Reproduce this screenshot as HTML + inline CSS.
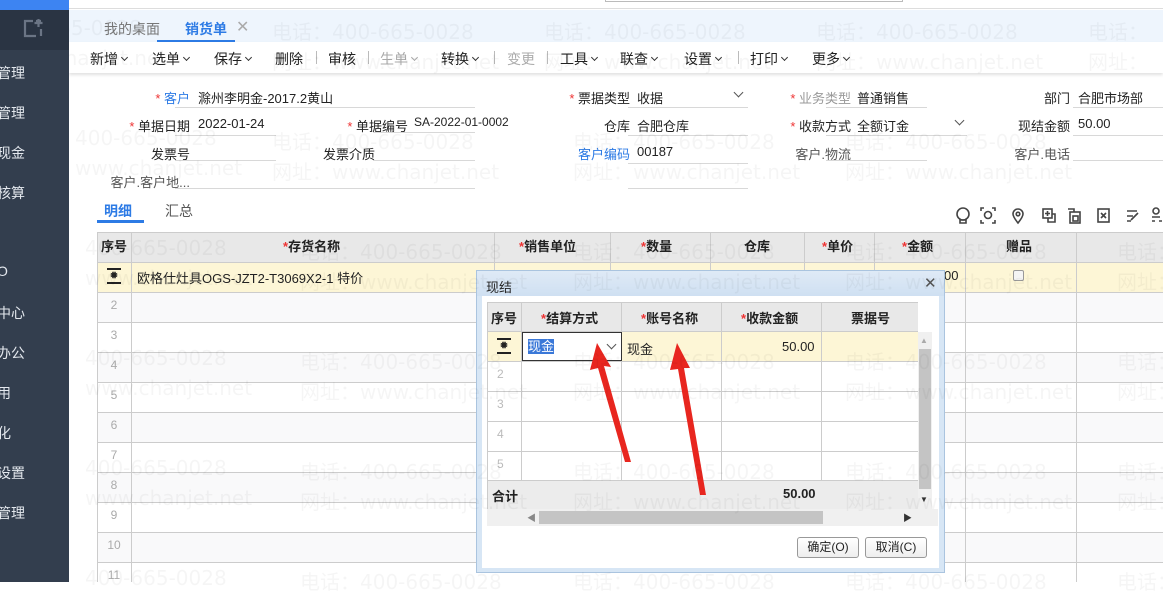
<!DOCTYPE html>
<html><head><meta charset="utf-8">
<style>
*{margin:0;padding:0;box-sizing:border-box}
body{width:1163px;height:582px;overflow:hidden;position:relative;background:#fff;font-family:"Liberation Sans","Noto Sans CJK SC",sans-serif;font-size:13px;color:#222}
.a{position:absolute;white-space:nowrap}
.side{position:absolute;left:0;top:0;width:69px;height:582px;background:#333e4e;z-index:60}
.side .t{position:absolute;left:0;width:69px;height:10px;background:#3d84f2;top:0}
.side .h{position:absolute;left:0;top:10px;width:69px;height:40px;background:#2a3443}
.side .i{position:absolute;left:-3px;color:#e4e8ee;font-size:14px}
.tb span{position:absolute;top:49px;font-size:14px;color:#222}
.c{display:inline-block;width:5px;height:5px;border-right:1.5px solid #333;border-bottom:1.5px solid #333;transform:rotate(45deg);margin-left:4px;vertical-align:4px}
.gr .c{border-color:#aaa}
.cv{position:absolute;width:7px;height:7px;border-right:1.5px solid #555;border-bottom:1.5px solid #555;transform:rotate(45deg)}
.sep{position:absolute;top:51px;width:1px;height:13px;background:#bbb}
.lbl{position:absolute;text-align:right;font-size:13px;color:#222}
.ul{position:absolute;height:1px;background:#d8d8d8}
.req{color:#e33}
.g{position:absolute;background:#ccc}
.hd{position:absolute;top:236px;font-weight:bold;font-size:13px}
.rn{position:absolute;left:97px;width:34px;text-align:center;color:#aaa;font-size:12px}
.wm{position:absolute;font-size:20px;color:rgba(0,0,0,0.04);white-space:nowrap;font-family:"DejaVu Sans","Noto Sans CJK SC",sans-serif;pointer-events:none;z-index:50}
</style></head><body>
<!-- top -->
<div class="a" style="left:69px;top:0;width:1094px;height:9px;background:#fff;border-bottom:1px solid #ddd"></div>
<div class="a" style="left:605px;top:-2px;width:298px;height:4px;border:1px solid #bbb;background:#fff"></div>
<div class="a" style="left:69px;top:10px;width:1094px;height:32px;background:#eef5fd"></div>
<div class="a" style="left:104px;top:19px;font-size:14px;color:#777">我的桌面</div>
<div class="a" style="left:185px;top:19px;font-size:14px;color:#2d7be5;font-weight:bold">销货单</div>
<div class="a" style="left:236px;top:17px;font-size:16px;color:#aaa">✕</div>
<div class="a" style="left:157px;top:40px;width:78px;height:2px;background:#2d7be5"></div>
<div class="a" style="left:69px;top:42px;width:1094px;height:31px;background:#fff;box-shadow:0 2px 3px rgba(0,0,0,0.12)"></div>
<div class="tb">
<span style="left:90px">新增<i class="c"></i></span><span style="left:152px">选单<i class="c"></i></span><span style="left:214px">保存<i class="c"></i></span><span style="left:275px">删除</span>
<span style="left:328px">审核</span><span class="gr" style="left:380px;color:#aaa">生单<i class="c"></i></span><span style="left:441px">转换<i class="c"></i></span><span style="left:507px;color:#aaa">变更</span>
<span style="left:560px">工具<i class="c"></i></span><span style="left:620px">联查<i class="c"></i></span><span style="left:684px">设置<i class="c"></i></span><span style="left:750px">打印<i class="c"></i></span><span style="left:812px">更多<i class="c"></i></span>
</div>
<div class="sep" style="left:316px"></div><div class="sep" style="left:368px"></div><div class="sep" style="left:494px"></div><div class="sep" style="left:547px"></div><div class="sep" style="left:738px"></div>
<!-- form -->
<div class="lbl" style="left:100px;width:90px;top:88px;color:#2d7be5"><span class="req">* </span>客户</div>
<div class="a" style="left:198px;top:88px">滁州李明金-2017.2黄山</div><div class="ul" style="left:175px;width:300px;top:107px"></div>
<div class="lbl" style="left:540px;width:90px;top:88px"><span class="req">* </span>票据类型</div>
<div class="a" style="left:637px;top:88px">收据</div><div class="cv" style="left:735px;top:89px"></div><div class="ul" style="left:628px;width:120px;top:107px"></div>
<div class="lbl" style="left:761px;width:90px;top:88px;color:#999"><span class="req">* </span>业务类型</div>
<div class="a" style="left:857px;top:88px">普通销售</div><div class="ul" style="left:826px;width:101px;top:107px"></div>
<div class="lbl" style="left:1000px;width:70px;top:88px">部门</div>
<div class="a" style="left:1078px;top:88px">合肥市场部</div><div class="ul" style="left:1073px;width:90px;top:107px"></div>

<div class="lbl" style="left:100px;width:90px;top:116px"><span class="req">* </span>单据日期</div>
<div class="a" style="left:198px;top:116px">2022-01-24</div><div class="ul" style="left:175px;width:101px;top:135px"></div>
<div class="lbl" style="left:318px;width:90px;top:116px"><span class="req">* </span>单据编号</div>
<div class="a" style="left:414px;top:115px;font-size:12px">SA-2022-01-0002</div><div class="ul" style="left:373px;width:102px;top:132px"></div>
<div class="lbl" style="left:540px;width:90px;top:116px">仓库</div>
<div class="a" style="left:637px;top:116px">合肥仓库</div><div class="ul" style="left:628px;width:120px;top:135px"></div>
<div class="lbl" style="left:761px;width:90px;top:116px"><span class="req">* </span>收款方式</div>
<div class="a" style="left:857px;top:116px">全额订金</div><div class="cv" style="left:956px;top:117px"></div><div class="ul" style="left:826px;width:141px;top:135px"></div>
<div class="lbl" style="left:980px;width:90px;top:116px">现结金额</div>
<div class="a" style="left:1078px;top:116px">50.00</div><div class="ul" style="left:1073px;width:90px;top:135px"></div>

<div class="lbl" style="left:100px;width:90px;top:144px">发票号</div><div class="ul" style="left:175px;width:101px;top:160px"></div>
<div class="a" style="left:323px;top:144px">发票介质</div><div class="ul" style="left:373px;width:102px;top:160px"></div>
<div class="lbl" style="left:540px;width:90px;top:144px;color:#2d7be5">客户编码</div>
<div class="a" style="left:637px;top:144px">00187</div><div class="ul" style="left:628px;width:120px;top:163px"></div>
<div class="lbl" style="left:761px;width:90px;top:144px;color:#555">客户.物流</div><div class="ul" style="left:826px;width:101px;top:160px"></div>
<div class="lbl" style="left:980px;width:90px;top:144px;color:#555">客户.电话</div><div class="ul" style="left:1073px;width:90px;top:160px"></div>
<div class="lbl" style="left:90px;width:100px;top:172px;color:#555">客户.客户地...</div><div class="ul" style="left:175px;width:300px;top:188px"></div><div class="ul" style="left:628px;width:120px;top:188px"></div>

<!-- tabs -->
<div class="a" style="left:104px;top:201px;font-size:14px;color:#2d7be5;font-weight:bold">明细</div>
<div class="a" style="left:165px;top:201px;font-size:14px;color:#555">汇总</div>
<div class="a" style="left:97px;top:220px;width:47px;height:3px;background:#2d7be5"></div>
<svg class="a" style="left:955px;top:207px" width="208" height="18" fill="none" stroke="#444" stroke-width="1.6">
 <circle cx="8" cy="7" r="6"/><path d="M5 13h6v3H5z"/>
 <path d="M29 1h-3v3M37 1h3v3M29 16h-3v-3M37 16h3v-3"/><circle cx="33" cy="8" r="3.5"/>
 <path d="M63 16c-4-5-5-7-5-9a5 5 0 0 1 10 0c0 2-1 4-5 9z"/><circle cx="63" cy="7" r="1.8"/>
 <rect x="88" y="2" width="9" height="9"/><path d="M92.5 4v5M90 6.5h5M93 11v4h7V7h-3"/>
 <rect x="115" y="5" width="10" height="11"/><rect x="118" y="9" width="5" height="5"/><path d="M113 2h6v3"/>
 <rect x="143" y="2" width="11" height="13"/><path d="M146 6l5 5M151 6l-5 5"/>
 <path d="M172 4h10M172 9h6M172 14h4M176 13l7-7"/>
 <circle cx="201" cy="4" r="3"/><path d="M197 10h8M197 14h3M204 14h3"/>
</svg>

<!-- grid -->
<div class="a" style="left:97px;top:232px;width:1066px;height:30px;background:#e8e8e8"></div>
<div class="a" style="left:97px;top:262px;width:1066px;height:30px;background:#fdf6d6"></div>
<div class="a" style="left:97px;top:292px;width:1066px;height:30px;background:#f9f9fa"></div>
<div class="a" style="left:97px;top:352px;width:1066px;height:30px;background:#f9f9fa"></div>
<div class="a" style="left:97px;top:412px;width:1066px;height:30px;background:#f9f9fa"></div>
<div class="a" style="left:97px;top:472px;width:1066px;height:30px;background:#f9f9fa"></div>
<div class="a" style="left:97px;top:532px;width:1066px;height:30px;background:#f9f9fa"></div>
<div class="g" style="left:97px;top:232px;width:1066px;height:1px"></div>
<div class="g" style="left:97px;top:262px;width:1066px;height:1px"></div>
<div class="g" style="left:97px;top:292px;width:1066px;height:1px"></div>
<div class="g" style="left:97px;top:322px;width:1066px;height:1px"></div>
<div class="g" style="left:97px;top:352px;width:1066px;height:1px"></div>
<div class="g" style="left:97px;top:382px;width:1066px;height:1px"></div>
<div class="g" style="left:97px;top:412px;width:1066px;height:1px"></div>
<div class="g" style="left:97px;top:442px;width:1066px;height:1px"></div>
<div class="g" style="left:97px;top:472px;width:1066px;height:1px"></div>
<div class="g" style="left:97px;top:502px;width:1066px;height:1px"></div>
<div class="g" style="left:97px;top:532px;width:1066px;height:1px"></div>
<div class="g" style="left:97px;top:562px;width:1066px;height:1px"></div>
<div class="g" style="left:97px;top:232px;width:1px;height:350px"></div>
<div class="g" style="left:131px;top:232px;width:1px;height:350px"></div>
<div class="g" style="left:494px;top:232px;width:1px;height:60px"></div>
<div class="g" style="left:610px;top:232px;width:1px;height:60px"></div>
<div class="g" style="left:710px;top:232px;width:1px;height:60px"></div>
<div class="g" style="left:804px;top:232px;width:1px;height:60px"></div>
<div class="g" style="left:874px;top:232px;width:1px;height:60px"></div>
<div class="g" style="left:965px;top:232px;width:1px;height:350px"></div>
<div class="g" style="left:1076px;top:232px;width:1px;height:350px"></div>
<div class="hd" style="left:101px">序号</div>
<div class="hd" style="left:283px"><span class="req">*</span>存货名称</div>
<div class="hd" style="left:519px"><span class="req">*</span>销售单位</div>
<div class="hd" style="left:641px"><span class="req">*</span>数量</div>
<div class="hd" style="left:744px">仓库</div>
<div class="hd" style="left:822px"><span class="req">*</span>单价</div>
<div class="hd" style="left:902px"><span class="req">*</span>金额</div>
<div class="hd" style="left:1006px">赠品</div>
<div class="a" style="left:107px;top:268px;width:14px;height:16px;border-top:2px solid #222;border-bottom:2px solid #222;text-align:center;font-size:11px;line-height:12px">✹</div>
<div class="a" style="left:137px;top:268px">欧格仕灶具OGS-JZT2-T3069X2-1 特价</div>
<div class="a" style="left:944px;top:268px">00</div>
<div class="a" style="left:1013px;top:270px;width:11px;height:11px;border:1px solid #999;border-radius:2px;background:#f4f4f4"></div>
<div class="rn" style="top:298px">2</div><div class="rn" style="top:328px">3</div><div class="rn" style="top:358px">4</div><div class="rn" style="top:388px">5</div><div class="rn" style="top:418px">6</div><div class="rn" style="top:448px">7</div><div class="rn" style="top:478px">8</div><div class="rn" style="top:508px">9</div><div class="rn" style="top:538px">10</div><div class="rn" style="top:568px">11</div>

<!-- sidebar -->
<div class="side"><div class="t"></div><div class="h"></div>
<svg class="a" style="left:23px;top:19px" width="20" height="20" fill="none" stroke="#6b7585" stroke-width="2.2"><path d="M10 2H2v15h11M13 2h5M15.5 0v8M11.5 4h8M18 10v7"/></svg>
<div class="i" style="top:63px">管理</div><div class="i" style="top:103px">管理</div><div class="i" style="top:143px">现金</div><div class="i" style="top:183px">核算</div>
<div class="i" style="top:263px">O</div><div class="i" style="top:303px">中心</div><div class="i" style="top:343px">办公</div><div class="i" style="top:383px">用</div><div class="i" style="top:423px">化</div><div class="i" style="top:463px">设置</div><div class="i" style="top:503px">管理</div>
</div>

<!-- dialog -->
<div class="a" style="left:476px;top:270px;width:469px;height:303px;background:#d7e6f5;border:1px solid #aac4df;z-index:10">
 <div class="a" style="left:0;top:0;width:467px;height:25px;background:linear-gradient(#dfeaf6,#cfe0f2)"></div>
 <div class="a" style="left:9px;top:6px;font-size:13px">现结</div>
 <div class="a" style="left:447px;top:3px;font-size:15px;color:#555">✕</div>
 <div class="a" style="left:5px;top:25px;width:457px;height:272px;background:#fff"></div>
</div>
<div style="position:absolute;left:0;top:0;z-index:20">
 <div class="a" style="left:487px;top:302px;width:431px;height:29px;background:#e8e8e8"></div>
 <div class="a" style="left:487px;top:331px;width:431px;height:30px;background:#fdf6d6"></div>
 <div class="a" style="left:487px;top:361px;width:431px;height:120px;background:#fff"></div>
 <div class="a" style="left:487px;top:481px;width:431px;height:28px;background:#ececec"></div>
 <div class="a" style="left:487px;top:509px;width:451px;height:17px;background:#f0f0f0"></div>
 <div class="a" style="left:539px;top:511px;width:284px;height:13px;background:#c4c4c4"></div>
 <div class="a" style="left:527px;top:511px;font-size:9px;color:#888">◀</div>
 <div class="a" style="left:903px;top:511px;font-size:9px;color:#333">▶</div>
 <div class="a" style="left:918px;top:332px;width:14px;height:177px;background:#f0f0f0"></div>
 <div class="a" style="left:919px;top:349px;width:12px;height:140px;background:#c4c4c4"></div>
 <div class="a" style="left:920px;top:336px;font-size:8px;color:#aaa">▲</div>
 <div class="a" style="left:920px;top:495px;font-size:8px;color:#333">▼</div>
 <div class="g" style="left:487px;top:302px;width:431px;height:1px"></div>
 <div class="g" style="left:487px;top:331px;width:431px;height:1px"></div>
 <div class="g" style="left:487px;top:361px;width:431px;height:1px"></div>
 <div class="g" style="left:487px;top:391px;width:431px;height:1px"></div>
 <div class="g" style="left:487px;top:421px;width:431px;height:1px"></div>
 <div class="g" style="left:487px;top:451px;width:431px;height:1px"></div>
 <div class="g" style="left:487px;top:480px;width:431px;height:1px"></div>
 <div class="g" style="left:487px;top:302px;width:1px;height:207px"></div>
 <div class="g" style="left:521px;top:302px;width:1px;height:178px"></div>
 <div class="g" style="left:621px;top:302px;width:1px;height:178px"></div>
 <div class="g" style="left:721px;top:302px;width:1px;height:178px"></div>
 <div class="g" style="left:821px;top:302px;width:1px;height:178px"></div>
 <div class="a" style="left:491px;top:308px;font-weight:bold">序号</div>
 <div class="a" style="left:541px;top:308px;font-weight:bold"><span class="req">*</span>结算方式</div>
 <div class="a" style="left:641px;top:308px;font-weight:bold"><span class="req">*</span>账号名称</div>
 <div class="a" style="left:741px;top:308px;font-weight:bold"><span class="req">*</span>收款金额</div>
 <div class="a" style="left:851px;top:308px;font-weight:bold">票据号</div>
 <div class="a" style="left:497px;top:338px;width:14px;height:16px;border-top:2px solid #222;border-bottom:2px solid #222;text-align:center;font-size:11px;line-height:12px">✹</div>
 <div class="a" style="left:522px;top:332px;width:100px;height:29px;border:1px solid #333;background:#fff"></div>
 <div class="a" style="left:528px;top:339px;background:#3a78d8;color:#fff;line-height:15px">现金</div>
 <div class="cv" style="left:608px;top:341px"></div>
 <div class="a" style="left:627px;top:339px">现金</div>
 <div class="a" style="left:782px;top:339px">50.00</div>
 <div class="a" style="left:497px;top:367px;color:#bbb;font-size:12px">2</div>
 <div class="a" style="left:497px;top:397px;color:#bbb;font-size:12px">3</div>
 <div class="a" style="left:497px;top:427px;color:#bbb;font-size:12px">4</div>
 <div class="a" style="left:497px;top:457px;color:#bbb;font-size:12px">5</div>
 <div class="a" style="left:492px;top:486px;font-weight:bold">合计</div>
 <div class="a" style="left:783px;top:486px;font-weight:bold">50.00</div>
 <div class="a" style="left:797px;top:537px;width:62px;height:21px;border:1px solid #999;border-radius:3px;background:linear-gradient(#fff,#eee);font-size:12px;text-align:center;line-height:19px">确定(O)</div>
 <div class="a" style="left:865px;top:537px;width:62px;height:21px;border:1px solid #999;border-radius:3px;background:linear-gradient(#fff,#eee);font-size:12px;text-align:center;line-height:19px">取消(C)</div>
 <svg class="a" style="left:0;top:0" width="1163" height="582">
  <polygon points="597,343 611,367 604,366 631,462 625,462 598,368 590,370" fill="#e8261f"/>
  <polygon points="677,343 690,368 684,368 706,495 700,495 678,369 670,370" fill="#e8261f"/>
 </svg>
</div>

<!-- watermarks -->
<div class="wm" style="left:0;top:16px">400-665-0028</div>
<div class="wm" style="left:272px;top:16px">电话：400-665-0028</div><div class="wm" style="left:544px;top:16px">电话：400-665-0028</div><div class="wm" style="left:816px;top:16px">电话：400-665-0028</div><div class="wm" style="left:1088px;top:16px">电话：</div>
<div class="wm" style="left:0;top:46px">www.chanjet.net</div>
<div class="wm" style="left:272px;top:46px">网址：www.chanjet.net</div><div class="wm" style="left:544px;top:46px">网址：www.chanjet.net</div><div class="wm" style="left:816px;top:46px">网址：www.chanjet.net</div><div class="wm" style="left:1088px;top:46px">网址：</div>
<div class="wm" style="left:75px;top:126px">400-665-0028</div>
<div class="wm" style="left:272px;top:126px">电话：400-665-0028</div><div class="wm" style="left:573px;top:126px">电话：400-665-0028</div><div class="wm" style="left:845px;top:126px">电话：400-665-0028</div>
<div class="wm" style="left:75px;top:156px">www.chanjet.net</div>
<div class="wm" style="left:272px;top:156px">网址：www.chanjet.net</div><div class="wm" style="left:573px;top:156px">网址：www.chanjet.net</div><div class="wm" style="left:845px;top:156px">网址：www.chanjet.net</div>
<div class="wm" style="left:85px;top:236px">400-665-0028</div><div class="wm" style="left:300px;top:236px">电话：400-665-0028</div><div class="wm" style="left:573px;top:236px">电话：400-665-0028</div><div class="wm" style="left:845px;top:236px">电话：400-665-0028</div><div class="wm" style="left:1117px;top:236px">电话：</div>
<div class="wm" style="left:85px;top:266px">www.chanjet.net</div><div class="wm" style="left:300px;top:266px">网址：www.chanjet.net</div><div class="wm" style="left:573px;top:266px">网址：www.chanjet.net</div><div class="wm" style="left:845px;top:266px">网址：www.chanjet.net</div><div class="wm" style="left:1117px;top:266px">网址：</div>
<div class="wm" style="left:85px;top:346px">400-665-0028</div><div class="wm" style="left:300px;top:346px">电话：400-665-0028</div><div class="wm" style="left:573px;top:346px">电话：400-665-0028</div><div class="wm" style="left:845px;top:346px">电话：400-665-0028</div><div class="wm" style="left:1117px;top:346px">电话：</div>
<div class="wm" style="left:85px;top:376px">www.chanjet.net</div><div class="wm" style="left:300px;top:376px">网址：www.chanjet.net</div><div class="wm" style="left:573px;top:376px">网址：www.chanjet.net</div><div class="wm" style="left:845px;top:376px">网址：www.chanjet.net</div><div class="wm" style="left:1117px;top:376px">网址：</div>
<div class="wm" style="left:85px;top:456px">400-665-0028</div><div class="wm" style="left:300px;top:456px">电话：400-665-0028</div><div class="wm" style="left:573px;top:456px">电话：400-665-0028</div><div class="wm" style="left:845px;top:456px">电话：400-665-0028</div><div class="wm" style="left:1117px;top:456px">电话：</div>
<div class="wm" style="left:85px;top:486px">www.chanjet.net</div><div class="wm" style="left:300px;top:486px">网址：www.chanjet.net</div><div class="wm" style="left:573px;top:486px">网址：www.chanjet.net</div><div class="wm" style="left:845px;top:486px">网址：www.chanjet.net</div><div class="wm" style="left:1117px;top:486px">网址：</div>
<div class="wm" style="left:85px;top:566px">400-665-0028</div><div class="wm" style="left:300px;top:566px">电话：400-665-0028</div><div class="wm" style="left:573px;top:566px">电话：400-665-0028</div><div class="wm" style="left:845px;top:566px">电话：400-665-0028</div><div class="wm" style="left:1117px;top:566px">电话：</div>
</body></html>
